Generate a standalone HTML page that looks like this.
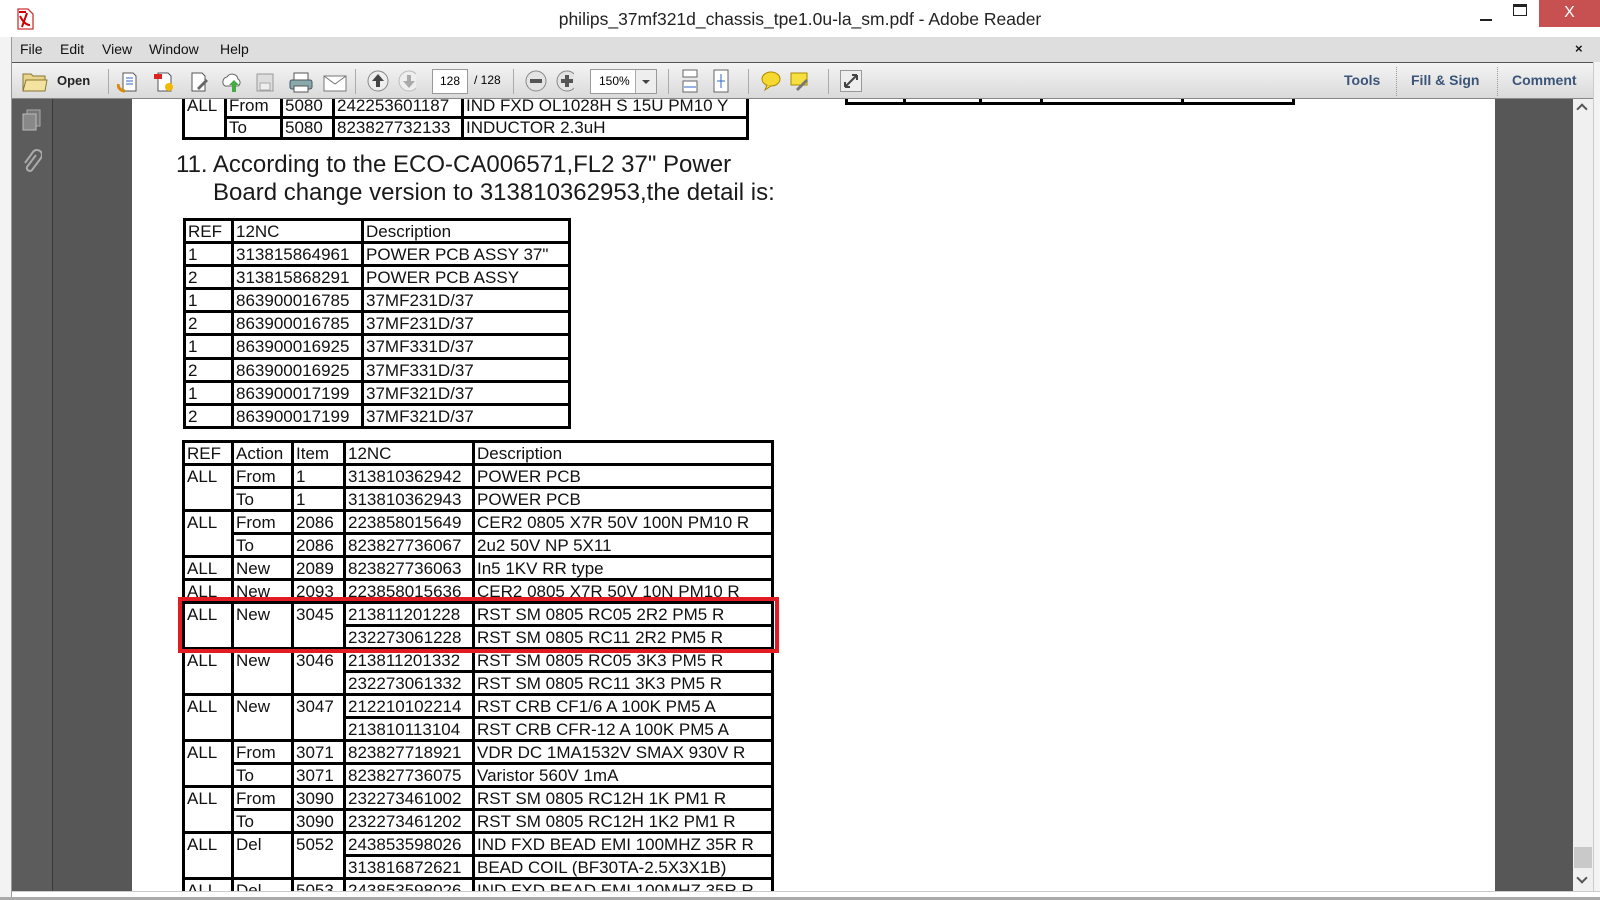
<!DOCTYPE html>
<html><head><meta charset="utf-8"><style>
*{margin:0;padding:0;box-sizing:border-box}
body{width:1600px;height:900px;overflow:hidden;background:#fff;font-family:"Liberation Sans",sans-serif;position:relative}
.a{position:absolute}
#title{left:0;top:0;width:1600px;height:37px;background:#fff;font-size:17.5px;color:#222;text-align:center;line-height:38px}
#menu{left:12px;top:37px;width:1588px;height:25px;background:#dedede;font-size:14px;color:#111}
#menu span{position:absolute;top:4px}
#tb{left:12px;top:62px;width:1588px;height:37px;background:linear-gradient(#f4f4f4,#dadada);border-top:1px solid #555;border-bottom:1px solid #888}
.sep{position:absolute;top:6px;width:1px;height:25px;background:#aaa}
.ic{position:absolute;top:8px}
#nav{left:12px;top:99px;width:41px;height:792px;background:#5c5c5c;border-right:1px solid #3a3a3a}
#gray{left:53px;top:99px;width:1520px;height:792px;background:#575757}
#page{left:132px;top:99px;width:1363px;height:792px;background:#fff;overflow:hidden}
#sb{left:1573px;top:99px;width:20px;height:792px;background:#f0f0f0}
table{border-spacing:3px;background:#000;position:absolute;font-size:17px;color:#111}
td{background:#fff;height:20px;line-height:19px;padding:1px 0 0 2px;vertical-align:top;white-space:nowrap;overflow:hidden}
.t1 td{height:20.1px}
.t2 td{height:19.75px}
.t0 td{height:18px;line-height:18px;padding-top:0}
</style></head><body>
<div id="title" class="a">philips_37mf321d_chassis_tpe1.0u-la_sm.pdf - Adobe Reader</div>
<svg class="a" style="left:14px;top:8px" width="22" height="22" viewBox="0 0 22 22"><path d="M4 1h10l5 5v15H4z" fill="#fff" stroke="#c33" stroke-width="1.3"/><path d="M5 4h7M6 8c3 6 6 9 10 9M8 19c2-6 4-11 5-14" stroke="#c00" stroke-width="2" fill="none"/></svg>
<div class="a" style="left:1480px;top:19px;width:12px;height:2px;background:#222"></div>
<div class="a" style="left:1513px;top:4px;width:14px;height:12px;border:1px solid #222;border-top:3px solid #222"></div>
<div class="a" style="left:1539px;top:0;width:61px;height:27px;background:#c75050;color:#fff;font-size:16px;text-align:center;line-height:26px">X</div>
<div class="a" style="left:0;top:37px;width:12px;height:863px;background:#f3f3f3;border-right:1px solid #999"></div>
<div id="menu" class="a"><span style="left:8px">File</span><span style="left:48px">Edit</span><span style="left:90px">View</span><span style="left:137px">Window</span><span style="left:208px">Help</span><span style="left:1563px;font-weight:bold;font-size:13px">×</span></div>
<div id="tb" class="a">
<svg class="ic" style="left:10px;top:7px" width="26" height="22"><path d="M1 4h8l2 2h12v15H1z" fill="#e8d48a" stroke="#8a7630"/><path d="M1 21l3-11h21l-2 11z" fill="#f2e3a0" stroke="#8a7630"/></svg>
<span style="position:absolute;left:45px;top:10px;font-size:13px;font-weight:bold;color:#222">Open</span>
<div class="sep" style="left:96px"></div>
<svg class="ic" style="left:105px" width="260" height="22"><g fill="#fff" stroke="#555"><path d="M6 2h10l3 3v15H6z"/><path d="M41 2h10l3 3v15H41z"/><path d="M75 2h10l3 3v15H75z"/></g><path d="M1 13c0 5 4 7 7 7" stroke="#d80" stroke-width="3" fill="none"/><path d="M9 7h7M9 10h7M9 13h7" stroke="#36c"/><rect x="37" y="3" width="8" height="5" fill="#d22"/><circle cx="52" cy="16" r="4" fill="#f4b800"/><path d="M80 17l9-9 2 2-9 9z" fill="#666"/><path d="M108 15a5 5 0 0 1 2-9 6 6 0 0 1 11 2 4 4 0 0 1 0 7z" fill="#fff" stroke="#666"/><path d="M115 21v-7h-3l5-5 5 5h-3v7z" fill="#4a4"/><rect x="140" y="3" width="16" height="17" fill="#ddd" stroke="#999"/><rect x="143" y="12" width="10" height="7" fill="#eee" stroke="#aaa"/><rect x="173" y="9" width="22" height="9" rx="2" fill="#8aa" stroke="#456"/><rect x="177" y="2" width="14" height="7" fill="#fff" stroke="#555"/><rect x="177" y="15" width="14" height="6" fill="#fff" stroke="#555"/><rect x="207" y="5" width="22" height="15" fill="#fff" stroke="#777"/><path d="M207 5l11 8 11-8" stroke="#777" fill="none"/></svg>
<div class="sep" style="left:343px"></div>
<svg class="ic" style="left:354px;top:6px" width="50" height="24"><circle cx="12" cy="12" r="10" fill="#eee" stroke="#888"/><path d="M12 5l-6 7h4v6h4v-6h4z" fill="#444"/><circle cx="43" cy="12" r="10" fill="#eee" stroke="#bbb"/><path d="M43 19l-6-7h4v-6h4v6h4z" fill="#aaa"/></svg>
<div class="a" style="left:420px;top:6px;width:36px;height:25px;background:#fff;border:1px solid #999;font-size:12px;text-align:center;line-height:23px">128</div>
<span style="position:absolute;left:462px;top:10px;font-size:12px">/ 128</span>
<div class="sep" style="left:501px"></div>
<svg class="ic" style="left:512px;top:6px" width="50" height="24"><circle cx="12" cy="12" r="10" fill="#e4e4e4" stroke="#888"/><rect x="6" y="10" width="12" height="4" fill="#555"/><circle cx="43" cy="12" r="10" fill="#e4e4e4" stroke="#888"/><path d="M37 10h4v-4h4v4h4v4h-4v4h-4v-4h-4z" fill="#555"/></svg>
<div class="a" style="left:578px;top:6px;width:67px;height:25px;background:#fff;border:1px solid #999;font-size:12px;line-height:23px;padding-left:8px">150%</div>
<div class="a" style="left:623px;top:7px;width:21px;height:23px;background:#eee;border-left:1px solid #aaa"></div>
<div class="a" style="left:630px;top:17px;border:4px solid transparent;border-top:4px solid #444"></div>
<div class="sep" style="left:656px"></div>
<svg class="ic" style="left:668px;top:5px" width="50" height="26"><rect x="3" y="2" width="14" height="7" fill="#fff" stroke="#666"/><rect x="3" y="13" width="14" height="11" fill="#fff" stroke="#666"/><path d="M4 19h12" stroke="#36c"/><rect x="34" y="2" width="14" height="22" fill="#fff" stroke="#666"/><path d="M41 6v14M37 13h8" stroke="#36c"/></svg>
<div class="sep" style="left:736px"></div>
<svg class="ic" style="left:748px;top:6px" width="50" height="24"><ellipse cx="11" cy="10" rx="9" ry="7" fill="#f5d830" stroke="#a80"/><path d="M7 16l-2 5 6-4" fill="#f5d830" stroke="#a80"/><rect x="31" y="4" width="16" height="12" fill="#f5e040" stroke="#a80"/><path d="M36 20l10-10 2 2-10 10z" fill="#777"/></svg>
<div class="sep" style="left:816px"></div>
<div class="a" style="left:828px;top:7px;width:22px;height:22px;background:#eee;border:1px solid #999"></div>
<svg class="ic" style="left:830px;top:9px" width="18" height="18"><path d="M3 15l12-12M3 15v-5M3 15h5M15 3h-5M15 3v5" stroke="#444" stroke-width="2" fill="none"/></svg>
<span style="position:absolute;left:1332px;top:9px;font-size:14px;color:#3b5578;font-weight:bold">Tools</span>
<div class="a" style="left:1384px;top:4px;height:29px;border-left:1px dotted #999"></div>
<span style="position:absolute;left:1399px;top:9px;font-size:14px;color:#3b5578;font-weight:bold">Fill &amp; Sign</span>
<div class="a" style="left:1485px;top:4px;height:29px;border-left:1px dotted #999"></div>
<span style="position:absolute;left:1500px;top:9px;font-size:14px;color:#3b5578;font-weight:bold">Comment</span>
</div>
<div id="gray" class="a"></div>
<div id="nav" class="a">
<svg class="a" style="left:9px;top:10px" width="22" height="24"><rect x="6" y="1" width="13" height="16" fill="#777" stroke="#aaa"/><rect x="2" y="5" width="13" height="16" fill="#888" stroke="#bbb"/></svg>
<svg class="a" style="left:10px;top:50px" width="20" height="28"><path d="M14 6l-9 12a3 3 0 0 0 5 3l9-12a5 5 0 0 0-8-6l-8 11" stroke="#aaa" stroke-width="2" fill="none"/></svg>
</div>
<div id="page" class="a">
<table class="t0" style="left:50px;top:-4px"><tr><td rowspan="2" style="width:39px;line-height:16px">ALL</td><td style="width:53px;line-height:16px">From</td><td style="width:49px;line-height:16px">5080</td><td style="width:126px;line-height:16px">242253601187</td><td style="width:282px;line-height:16px">IND FXD OL1028H S 15U PM10 Y</td></tr>
<tr><td>To</td><td>5080</td><td>823827732133</td><td>INDUCTOR 2.3uH</td></tr></table>
<table style="left:713px;top:-20px"><tr><td style="width:55px;height:19px"></td><td style="width:73px"></td><td style="width:58px"></td><td style="width:138px"></td><td style="width:108px"></td></tr></table>
<div class="a" style="left:44px;top:52px;font-size:24px;color:#1a1a1a;line-height:28px;white-space:nowrap">11. According to the ECO-CA006571,FL2 37" Power<br><span style="padding-left:37px">Board change version to 313810362953,the detail is:</span></div>
<table class="t1" style="left:51px;top:119px">
<tr><td style="width:45px">REF</td><td style="width:127px">12NC</td><td style="width:204px">Description</td></tr>
<tr><td>1</td><td>313815864961</td><td>POWER PCB ASSY 37"</td></tr>
<tr><td>2</td><td>313815868291</td><td>POWER PCB ASSY</td></tr>
<tr><td>1</td><td>863900016785</td><td>37MF231D/37</td></tr>
<tr><td>2</td><td>863900016785</td><td>37MF231D/37</td></tr>
<tr><td>1</td><td>863900016925</td><td>37MF331D/37</td></tr>
<tr><td>2</td><td>863900016925</td><td>37MF331D/37</td></tr>
<tr><td>1</td><td>863900017199</td><td>37MF321D/37</td></tr>
<tr><td>2</td><td>863900017199</td><td>37MF321D/37</td></tr>
</table>
<table class="t2" style="left:50px;top:341px">
<tr><td style="width:46px">REF</td><td style="width:57px">Action</td><td style="width:49px">Item</td><td style="width:126px">12NC</td><td style="width:296px">Description</td></tr>
<tr><td rowspan="2">ALL</td><td>From</td><td>1</td><td>313810362942</td><td>POWER PCB</td></tr>
<tr><td>To</td><td>1</td><td>313810362943</td><td>POWER PCB</td></tr>
<tr><td rowspan="2">ALL</td><td>From</td><td>2086</td><td>223858015649</td><td>CER2 0805 X7R 50V 100N PM10 R</td></tr>
<tr><td>To</td><td>2086</td><td>823827736067</td><td>2u2 50V NP 5X11</td></tr>
<tr><td>ALL</td><td>New</td><td>2089</td><td>823827736063</td><td>In5 1KV RR type</td></tr>
<tr><td>ALL</td><td>New</td><td>2093</td><td>223858015636</td><td>CER2 0805 X7R 50V 10N PM10 R</td></tr>
<tr><td rowspan="2">ALL</td><td rowspan="2">New</td><td rowspan="2">3045</td><td>213811201228</td><td>RST SM 0805 RC05 2R2 PM5 R</td></tr>
<tr><td>232273061228</td><td>RST SM 0805 RC11 2R2 PM5 R</td></tr>
<tr><td rowspan="2">ALL</td><td rowspan="2">New</td><td rowspan="2">3046</td><td>213811201332</td><td>RST SM 0805 RC05 3K3 PM5 R</td></tr>
<tr><td>232273061332</td><td>RST SM 0805 RC11 3K3 PM5 R</td></tr>
<tr><td rowspan="2">ALL</td><td rowspan="2">New</td><td rowspan="2">3047</td><td>212210102214</td><td>RST CRB CF1/6 A 100K PM5 A</td></tr>
<tr><td>213810113104</td><td>RST CRB CFR-12 A 100K PM5 A</td></tr>
<tr><td rowspan="2">ALL</td><td>From</td><td>3071</td><td>823827718921</td><td>VDR DC 1MA1532V SMAX 930V R</td></tr>
<tr><td>To</td><td>3071</td><td>823827736075</td><td>Varistor 560V 1mA</td></tr>
<tr><td rowspan="2">ALL</td><td>From</td><td>3090</td><td>232273461002</td><td>RST SM 0805 RC12H 1K PM1 R</td></tr>
<tr><td>To</td><td>3090</td><td>232273461202</td><td>RST SM 0805 RC12H 1K2 PM1 R</td></tr>
<tr><td rowspan="2">ALL</td><td rowspan="2">Del</td><td rowspan="2">5052</td><td>243853598026</td><td>IND FXD BEAD EMI 100MHZ 35R R</td></tr>
<tr><td>313816872621</td><td>BEAD COIL (BF30TA-2.5X3X1B)</td></tr>
<tr><td>ALL</td><td>Del</td><td>5053</td><td>243853598026</td><td>IND FXD BEAD EMI 100MHZ 35R R</td></tr>
</table>
<div class="a" style="left:46px;top:498px;width:601px;height:56px;border:4px solid #e31b23"></div>
</div>
<div id="sb" class="a">
<div class="a" style="left:5px;top:6px;width:8px;height:8px;border-left:2px solid #555;border-top:2px solid #555;transform:rotate(45deg)"></div>
<div class="a" style="left:1px;top:748px;width:18px;height:21px;background:#c9c9c9"></div>
<div class="a" style="left:5px;top:775px;width:8px;height:8px;border-right:2px solid #555;border-bottom:2px solid #555;transform:rotate(45deg)"></div>
</div>
<div class="a" style="left:1593px;top:62px;width:7px;height:838px;background:#f3f3f3;border-left:1px solid #ccc"></div>
<div class="a" style="left:12px;top:891px;width:1588px;height:6px;background:#fff;border-top:1px solid #ccc"></div>
<div class="a" style="left:0;top:897px;width:1600px;height:3px;background:#aaa"></div>
</body></html>
